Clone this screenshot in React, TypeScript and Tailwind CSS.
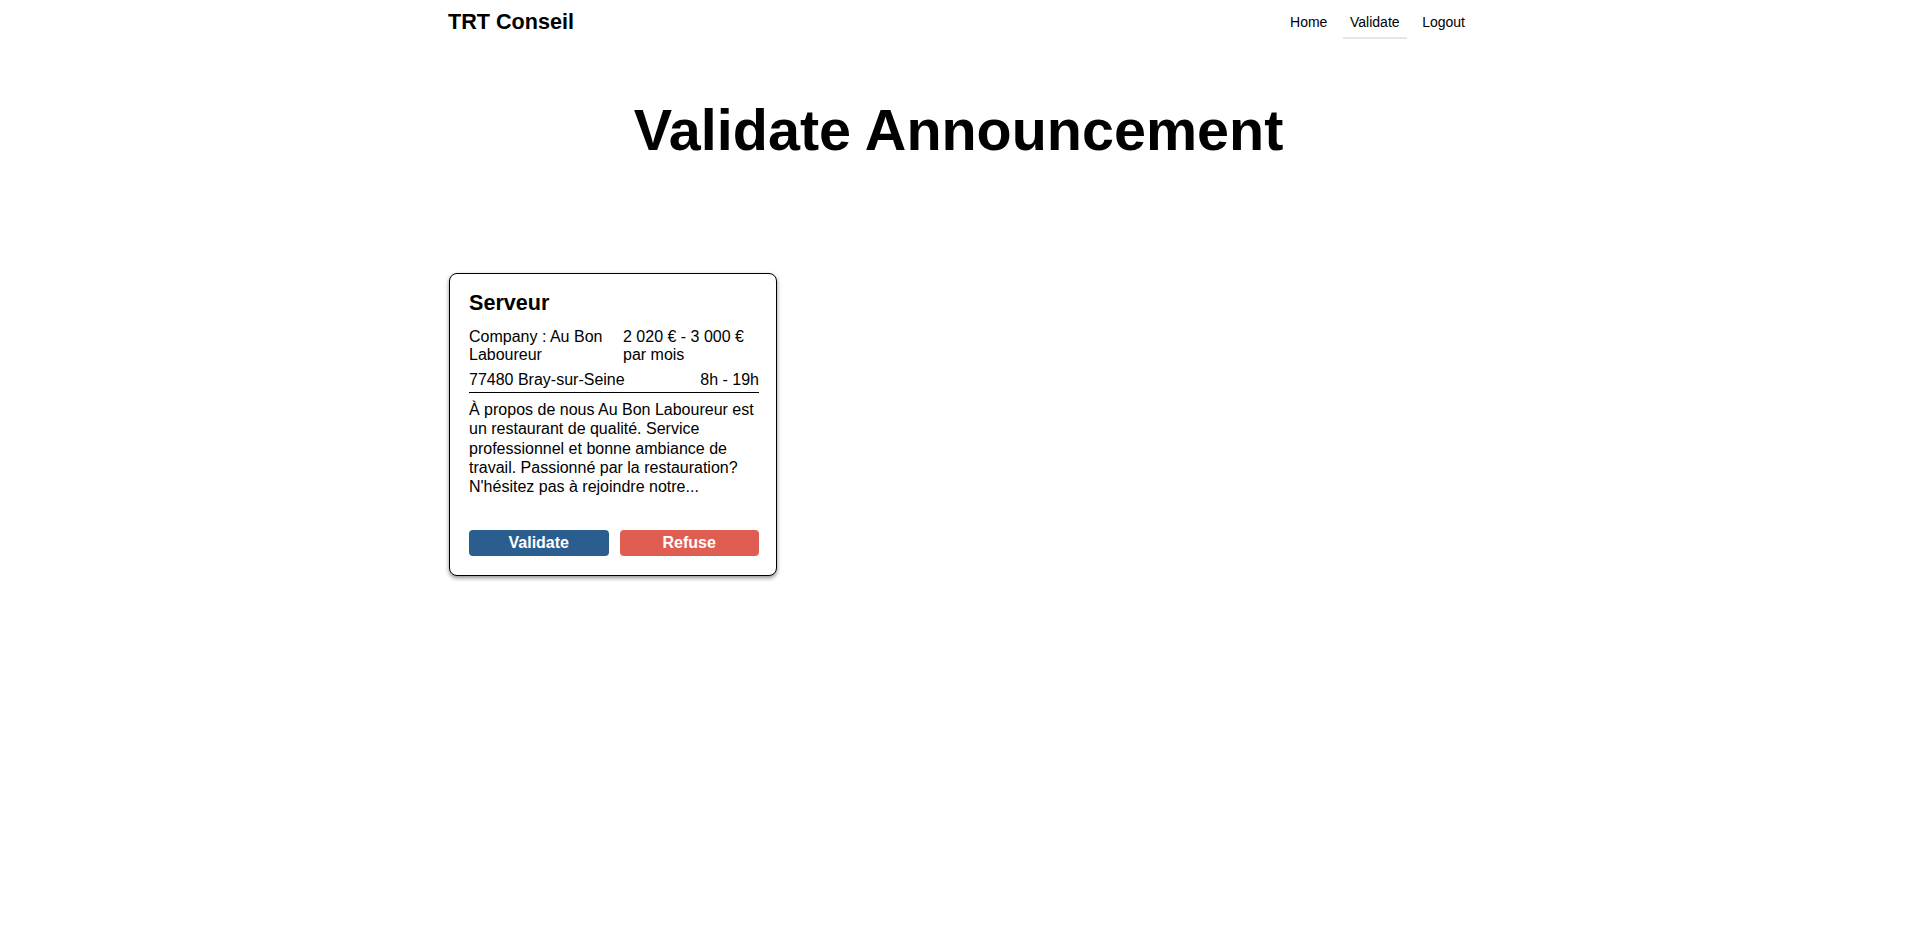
const announcements = [
  {
    id: 1,
    title: "Serveur",
    company: "Au Bon Laboureur",
    salary: "2 020 € - 3 000 € par mois",
    location: "77480 Bray-sur-Seine",
    hours: "8h - 19h",
    description:
      "À propos de nous Au Bon Laboureur est un restaurant de qualité. Service professionnel et bonne ambiance de travail. Passionné par la restauration? N'hésitez pas à rejoindre notre...",
  },
];

const links = [
  { label: "Home", active: false },
  { label: "Validate", active: true },
  { label: "Logout", active: false },
];

const Navbar = () => {
  return (
    <nav className="mx-auto flex w-[1027px] items-start justify-between">
      <a className="pl-[3px] pt-[6px] text-[21.6px] font-bold leading-[32.4px] text-black">TRT Conseil</a>
      <ul className="flex gap-[8.6px] pt-[8px]">
        {links.map((link) => (
          <li key={link.label}>
            <a
              className={
                link.active
                  ? "block border-b-2 border-[#e6e6e6] px-[7px] py-1 text-[14px] leading-[21px] text-black"
                  : "block border-b-2 border-transparent px-[7px] py-1 text-[14px] leading-[21px] text-black"
              }
            >
              {link.label}
            </a>
          </li>
        ))}
      </ul>
    </nav>
  );
};

type Announcement = (typeof announcements)[number];

const AnnouncementCard = ({ item }: { item: Announcement }) => {
  return (
    <div className="w-[328px] rounded-lg border border-black bg-white pb-[19px] pl-[19px] pr-[17px] pt-4 shadow-[0_2px_4px_rgba(0,0,0,0.45)]">
      <h5 className="mb-[12px] text-[21.6px] font-bold leading-[1.2]">{item.title}</h5>

      <div className="flex text-[16px] leading-[18.4px]">
        <span className="w-[154px] shrink-0">Company : {item.company}</span>
        <span className="flex-1">{item.salary}</span>
      </div>

      <div className="mt-[6px] flex justify-between border-b border-black pb-[3px] text-[16px] leading-[18.4px]">
        <span>{item.location}</span>
        <span>{item.hours}</span>
      </div>

      <p className="pt-[7px] text-[16px] leading-[19.2px]">{item.description}</p>

      <div className="mt-[34px] flex gap-[11px]">
        <button className="h-[26px] flex-1 rounded-[4px] bg-[#2a5e8f] text-[16px] font-bold text-white">Validate</button>
        <button className="h-[26px] flex-1 rounded-[4px] bg-[#e05d52] text-[16px] font-bold text-white">Refuse</button>
      </div>
    </div>
  );
};

const App = () => {
  return (
    <div className="min-h-screen bg-white font-['Liberation_Sans',Arial,sans-serif] text-black">
      <Navbar />

      <main className="mx-auto w-[1027px]">
        <h1 className="mt-[57px] text-center text-[57.5px] font-bold leading-[1.2]">Validate Announcement</h1>

        <div className="ml-1 mt-[108px] flex flex-wrap gap-6">
          {announcements.map((item) => (
            <AnnouncementCard key={item.id} item={item} />
          ))}
        </div>
      </main>
    </div>
  );
};

export default App;
